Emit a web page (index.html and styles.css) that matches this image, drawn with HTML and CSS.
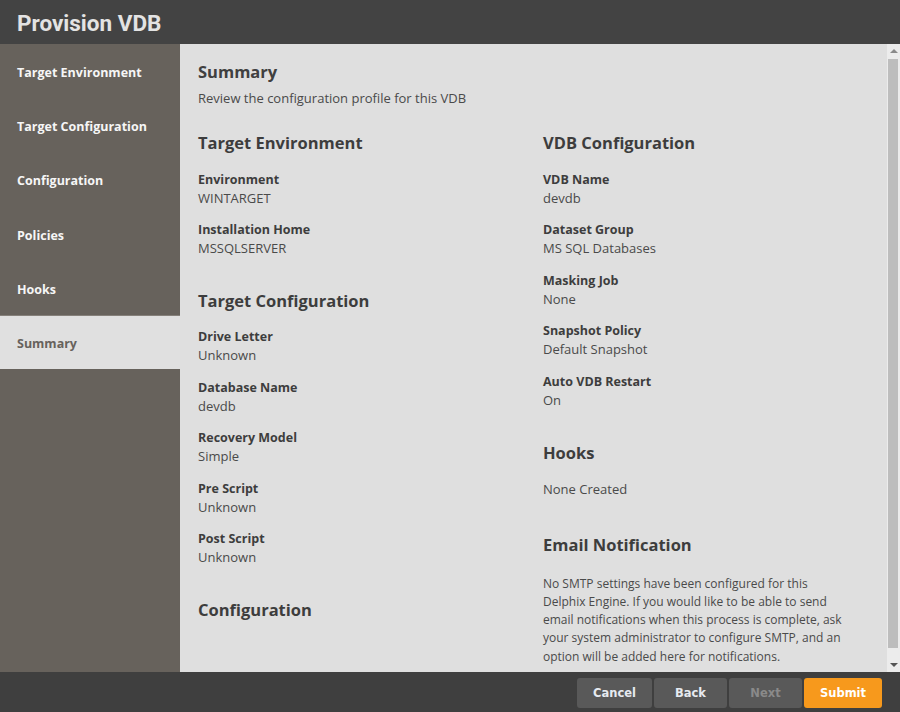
FILE: index.html
```html
<!DOCTYPE html>
<html>
<head>
<meta charset="utf-8">
<link rel="stylesheet" href="styles.css">
</head>
<body>
<div class="dialog">
  <header class="header"><h1 class="title">Provision VDB</h1></header>
  <div class="main">
    <nav class="sidebar">
      <div class="nav-item">Target Environment</div>
      <div class="nav-item">Target Configuration</div>
      <div class="nav-item">Configuration</div>
      <div class="nav-item">Policies</div>
      <div class="nav-item">Hooks</div>
      <div class="nav-item active">Summary</div>
    </nav>
    <section class="content">
      <div class="scroll-area">
        <h2 class="page-title">Summary</h2>
        <p class="intro">Review the configuration profile for this VDB</p>
        <div class="columns">
          <div class="col">
            <h3 class="sec">Target Environment</h3>
            <div class="field"><div class="label">Environment</div><div class="value">WINTARGET</div></div>
            <div class="field"><div class="label">Installation Home</div><div class="value">MSSQLSERVER</div></div>
            <h3 class="sec gap">Target Configuration</h3>
            <div class="field"><div class="label">Drive Letter</div><div class="value">Unknown</div></div>
            <div class="field"><div class="label">Database Name</div><div class="value">devdb</div></div>
            <div class="field"><div class="label">Recovery Model</div><div class="value">Simple</div></div>
            <div class="field"><div class="label">Pre Script</div><div class="value">Unknown</div></div>
            <div class="field"><div class="label">Post Script</div><div class="value">Unknown</div></div>
            <h3 class="sec gap">Configuration</h3>
          </div>
          <div class="col">
            <h3 class="sec">VDB Configuration</h3>
            <div class="field"><div class="label">VDB Name</div><div class="value">devdb</div></div>
            <div class="field"><div class="label">Dataset Group</div><div class="value">MS SQL Databases</div></div>
            <div class="field"><div class="label">Masking Job</div><div class="value">None</div></div>
            <div class="field"><div class="label">Snapshot Policy</div><div class="value">Default Snapshot</div></div>
            <div class="field"><div class="label">Auto VDB Restart</div><div class="value">On</div></div>
            <h3 class="sec gap">Hooks</h3>
            <div class="field"><div class="value">None Created</div></div>
            <h3 class="sec gap2">Email Notification</h3>
            <p class="note">No SMTP settings have been configured for this Delphix Engine. If you would like to be able to send email notifications when this process is complete, ask your system administrator to configure SMTP, and an option will be added here for notifications.</p>
          </div>
        </div>
      </div>
      <div class="scrollbar">
        <div class="sb-btn"><span class="arrow up"></span></div>
        <div class="sb-track"><div class="sb-thumb"></div></div>
        <div class="sb-btn"><span class="arrow down"></span></div>
      </div>
    </section>
  </div>
  <footer class="footer">
    <button class="btn">Cancel</button>
    <button class="btn">Back</button>
    <button class="btn disabled">Next</button>
    <button class="btn primary">Submit</button>
  </footer>
</div>
</body>
</html>
```
FILE: styles.css
```css
* { box-sizing: border-box; }
html, body { margin: 0; padding: 0; }
body { width: 900px; height: 712px; overflow: hidden; font-family: "Open Sans", "Noto Sans", sans-serif; }
.dialog { display: flex; flex-direction: column; width: 900px; height: 712px; }
.header { height: 44px; background: #434343; display: flex; align-items: center; padding-left: 17px; padding-top: 1px; flex: none; }
.title { margin: 0; font-family: Roboto, "Liberation Sans", sans-serif; font-weight: 700; font-size: 22.5px; color: #e3e3e3; }
.main { flex: 1; display: flex; min-height: 0; }
.sidebar { width: 180px; flex: none; background: #67625c; display: flex; flex-direction: column; }
.nav-item { height: 54.2px; display: flex; align-items: center; padding-left: 17px; padding-top: 3px; font-size: 12.5px; font-weight: 700; color: #f6f6f6; }
.nav-item.active { background: #e0e0e0; color: #67625c; border-top: 1px solid #85807a; padding-top: 2px; }
.content { flex: 1; display: flex; background: #dfdfdf; min-width: 0; }
.scroll-area { flex: 1; overflow: hidden; padding: 16px 0 0 18px; color: #444; }
.page-title { margin: 0; font-size: 16.5px; font-weight: 700; color: #404040; line-height: 24px; }
.intro { margin: 6px 0 0; font-size: 13px; line-height: 17px; color: #4a4a4a; }
.columns { display: flex; margin-top: 24px; }
.col { width: 345px; flex: none; }
.sec { margin: 0 0 16px; font-size: 16.5px; font-weight: 700; color: #3d3d3d; line-height: 24px; }
.sec.gap { margin-top: 32px; margin-bottom: 15px; }
.sec.gap2 { margin-top: 35px; margin-bottom: 14px; }
.field { margin-bottom: 14.4px; }
.label { font-size: 12.5px; font-weight: 700; color: #3d3d3d; line-height: 18px; }
.value { font-size: 13px; color: #4a4a4a; line-height: 18px; }
.note { margin: 18px 0 0; font-size: 12px; line-height: 18.3px; color: #4a4a4a; width: 305px; }
.scrollbar { width: 13px; flex: none; background: #ececec; display: flex; flex-direction: column; }
.sb-btn { height: 14px; display: flex; align-items: center; justify-content: center; }
.sb-track { flex: 1; padding: 0 2px 0 1px; display: flex; flex-direction: column; }
.sb-thumb { flex: 1; background: #bdbdbd; margin: 1px 0 10px; }
.arrow { width: 0; height: 0; border-left: 4px solid transparent; border-right: 4px solid transparent; }
.arrow.up { border-bottom: 4px solid #8a8a8a; }
.arrow.down { border-top: 4px solid #555; }
.footer { height: 40px; flex: none; background: #3f3f3f; display: flex; justify-content: flex-end; align-items: center; gap: 2px; padding-right: 18px; padding-top: 2px; }
.btn { height: 30px; border: none; border-radius: 3px; background: #595959; color: #e6eaf0; font-family: "DejaVu Sans", Verdana, sans-serif; font-weight: 700; font-size: 11.5px; width: 75px; padding: 0; }
.btn:nth-child(2), .btn.disabled { width: 73px; }
.btn.disabled { color: #8a8a8a; }
.btn.primary { background: #f7991c; color: #fff; width: 78px; }
```
